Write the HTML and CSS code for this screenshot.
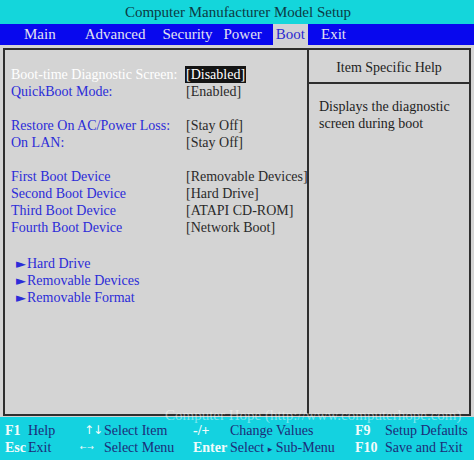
FILE: index.html
```html
<!DOCTYPE html>
<html>
<head>
<meta charset="utf-8">
<link rel="stylesheet" href="styles.css">
</head>
<body>
<div class="screen">
  <div class="title">Computer Manufacturer Model Setup</div>
  <div class="menu">
    <span class="mi m-main">Main</span>
    <span class="mi m-adv">Advanced</span>
    <span class="mi m-sec">Security</span>
    <span class="mi m-pow">Power</span>
    <span class="mi m-boot active">Boot</span>
    <span class="mi m-exit">Exit</span>
  </div>
  <div class="main">
    <div class="frame">
      <div class="left">
        <div class="row"><span class="lbl sel">Boot-time Diagnostic Screen:</span><span class="val"><span class="hl">[Disabled]</span></span></div>
        <div class="row"><span class="lbl">QuickBoot Mode:</span><span class="val">[Enabled]</span></div>
        <div class="row blank"></div>
        <div class="row"><span class="lbl">Restore On AC/Power Loss:</span><span class="val">[Stay Off]</span></div>
        <div class="row"><span class="lbl">On LAN:</span><span class="val">[Stay Off]</span></div>
        <div class="row blank"></div>
        <div class="row"><span class="lbl">First Boot Device</span><span class="val">[Removable Devices]</span></div>
        <div class="row"><span class="lbl">Second Boot Device</span><span class="val">[Hard Drive]</span></div>
        <div class="row"><span class="lbl">Third Boot Device</span><span class="val">[ATAPI CD-ROM]</span></div>
        <div class="row"><span class="lbl">Fourth Boot Device</span><span class="val">[Network Boot]</span></div>
        <div class="subs">
          <div class="sub"><span class="tri">►</span>Hard Drive</div>
          <div class="sub"><span class="tri">►</span>Removable Devices</div>
          <div class="sub"><span class="tri">►</span>Removable Format</div>
        </div>
      </div>
      <div class="right">
        <div class="help-head">Item Specific Help</div>
        <div class="help-body">Displays the diagnostic<br>screen during boot</div>
      </div>
    </div>
  </div>
  <div class="footer">
    <span class="k">F1</span><span class="t">Help</span>
    <span class="k arr">↑↓</span><span class="t">Select Item</span>
    <span class="k">-/+</span><span class="t">Change Values</span>
    <span class="k">F9</span><span class="t">Setup Defaults</span>
    <span class="k">Esc</span><span class="t">Exit</span>
    <span class="k arr2">← →</span><span class="t">Select Menu</span>
    <span class="k">Enter</span><span class="t">Select <span class="small-tri">▸</span> Sub-Menu</span>
    <span class="k">F10</span><span class="t">Save and Exit</span>
  </div>
  <div class="watermark">Computer Hope (http://www.computerhope.com)</div>
</div>
</body>
</html>
```

FILE: styles.css
```css
* { box-sizing: border-box; }
html, body { margin: 0; padding: 0; }
body {
  width: 474px;
  height: 460px;
  overflow: hidden;
  font-family: "Liberation Serif", "Times New Roman", serif;
  font-size: 14px;
  background: #d4d4d4;
}
.screen {
  position: relative;
  width: 474px;
  height: 460px;
  display: flex;
  flex-direction: column;
}
.title {
  height: 24px;
  background: #14d6db;
  color: #0c3a44;
  font-size: 15px;
  line-height: 24px;
  text-align: center;
  padding-left: 2px;
}
.menu {
  height: 21px;
  background: #0808ee;
  display: flex;
  align-items: stretch;
  font-size: 15px;
  line-height: 21px;
  color: #e2e2f0;
}
.mi { padding: 0 5px; }
.m-main { margin-left: 19px; }
.m-adv { margin-left: 19px; }
.m-sec { margin-left: 7px; }
.m-pow { margin-left: 1px; }
.m-boot { margin-left: 6px; }
.m-exit { margin-left: 8px; }
.mi.active {
  background: #d2d2d6;
  color: #2a2ad0;
  padding: 0 3px;
}
.main {
  height: 372px;
  padding: 3px 3px 1px 3px;
  background: #d4d4d4;
}
.frame {
  height: 100%;
  border: 2px solid #2e2e2e;
  display: grid;
  grid-template-columns: 302px 1fr;
}
.left {
  padding: 16px 0 0 6px;
}
.row {
  display: grid;
  grid-template-columns: 175px 1fr;
  height: 17px;
  line-height: 17px;
  color: #2a2a2a;
}
.lbl { color: #2c2cd8; white-space: nowrap; }
.lbl.sel { color: #ffffff; }
.val { white-space: nowrap; }
.hl {
  display: inline-block;
  background: #141414;
  color: #ffffff;
  padding: 0 1px;
  margin-left: -1px;
}
.subs { margin-top: 19px; padding-left: 5px; }
.sub {
  height: 17px;
  line-height: 17px;
  color: #2c2cd8;
}
.tri {
  font-family: "DejaVu Sans", sans-serif;
  font-size: 13px;
  margin-right: 1px;
}
.right {
  border-left: 2px solid #2e2e2e;
  display: flex;
  flex-direction: column;
}
.help-head {
  height: 34px;
  border-bottom: 2px solid #2e2e2e;
  text-align: center;
  line-height: 35px;
  color: #1e1e1e;
}
.help-body {
  padding: 14px 0 0 10px;
  line-height: 17px;
  color: #1e1e1e;
}
.footer {
  flex: 1;
  background: #14d2e0;
  display: grid;
  grid-template-columns: 23px 52px 24px 89px 37px 125px 30px 1fr;
  grid-auto-rows: 17px;
  line-height: 17px;
  padding: 5px 0 0 5px;
  font-size: 14px;
}
.k {
  color: #f2fbfb;
  font-weight: bold;
  white-space: nowrap;
}
.t {
  color: #1d2c78;
  white-space: nowrap;
}
.arr {
  font-family: "DejaVu Sans", sans-serif;
  font-weight: normal;
  font-size: 12px;
  padding-left: 4px;
  letter-spacing: -1px;
}
.arr2 {
  font-family: "DejaVu Sans", sans-serif;
  font-weight: normal;
  font-size: 8px;
  letter-spacing: -1px;
}
.small-tri {
  font-family: "DejaVu Sans", sans-serif;
  font-size: 9px;
}
.watermark {
  position: absolute;
  left: 165px;
  top: 409px;
  font-size: 15px;
  line-height: 12px;
  color: rgba(255, 255, 255, 0.45);
  white-space: nowrap;
}
```
